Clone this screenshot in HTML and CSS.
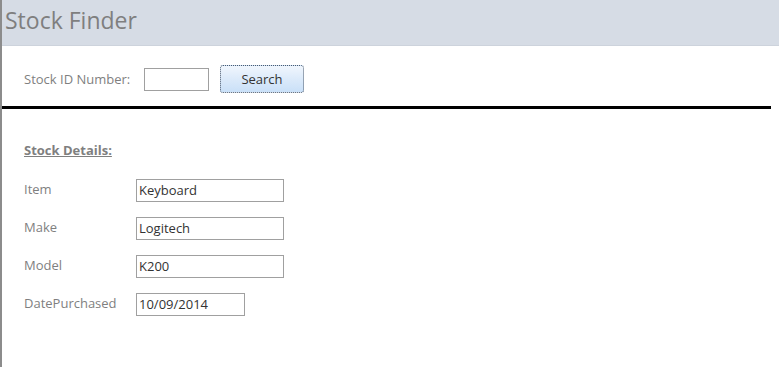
FILE: index.html
```html
<!DOCTYPE html>
<html lang="en">
<head>
  <meta charset="UTF-8">
  <title>Stock Finder</title>
  <link rel="stylesheet" href="styles.css">
</head>
<body>
  <div class="form-window">

    <div class="form-header">
      <span class="form-title">Stock Finder</span>
    </div>

    <div class="search-row">
      <label class="search-label" for="stock-id">Stock ID Number:</label>
      <input id="stock-id" class="search-input" type="text">
      <button class="search-button">Search</button>
    </div>

    <div class="divider"></div>

    <div class="details">
      <div class="details-title">Stock Details:</div>

      <div class="detail-row">
        <span class="detail-label">Item</span>
        <span class="detail-value">Keyboard</span>
      </div>
      <div class="detail-row">
        <span class="detail-label">Make</span>
        <span class="detail-value">Logitech</span>
      </div>
      <div class="detail-row">
        <span class="detail-label">Model</span>
        <span class="detail-value">K200</span>
      </div>
      <div class="detail-row">
        <span class="detail-label">DatePurchased</span>
        <span class="detail-value detail-date">10/09/2014</span>
      </div>
    </div>

  </div>
</body>
</html>
```

FILE: styles.css
```css
body {
  margin: 0;
  background-color: #fff;
  font-family: "Open Sans", "Liberation Sans", sans-serif;
}

.form-window {
  height: 367px;
  border-left: 2px solid #8c8c8c;
  box-sizing: border-box;
}

.form-header {
  height: 46px;
  background-color: #d6dce5;
  border-bottom: 1px solid #cdd3dc;
  box-sizing: border-box;
  padding-left: 3px;
}

.form-title {
  font-size: 23px;
  line-height: 40px;
  color: #7f7f7f;
}

.search-row {
  display: flex;
  align-items: center;
  height: 60px;
  box-sizing: border-box;
  padding: 6px 0 0 22px;
}

.search-label {
  font-size: 13px;
  color: #7f7f7f;
  width: 120px;
}

.search-input {
  width: 65px;
  height: 23px;
  box-sizing: border-box;
  border: 1px solid #a0a0a0;
  margin: 0 11px 0 0;
  padding: 0;
}

.search-button {
  width: 84px;
  height: 28px;
  border: 1px dotted #4c5a6c;
  border-radius: 3px;
  background: linear-gradient(#f0f6fd 0%, #dceafa 50%, #c9e0f8 100%);
  font-family: inherit;
  font-size: 13px;
  color: #333;
  padding: 0;
}

.divider {
  height: 3px;
  width: 769px;
  background-color: #000;
}

.details {
  padding: 32px 0 0 22px;
}

.details-title {
  font-size: 13px;
  font-weight: bold;
  color: #7f7f7f;
  text-decoration: underline;
  margin-bottom: 20px;
}

.detail-row {
  display: flex;
  align-items: center;
  margin-bottom: 15px;
}

.detail-label {
  width: 112px;
  font-size: 13px;
  color: #7f7f7f;
  margin-top: -4px;
}

.detail-value {
  width: 148px;
  height: 23px;
  box-sizing: border-box;
  border: 1px solid #a0a0a0;
  font-size: 13px;
  line-height: 20px;
  color: #333;
  padding-left: 2px;
}

.detail-date {
  width: 109px;
}
```
